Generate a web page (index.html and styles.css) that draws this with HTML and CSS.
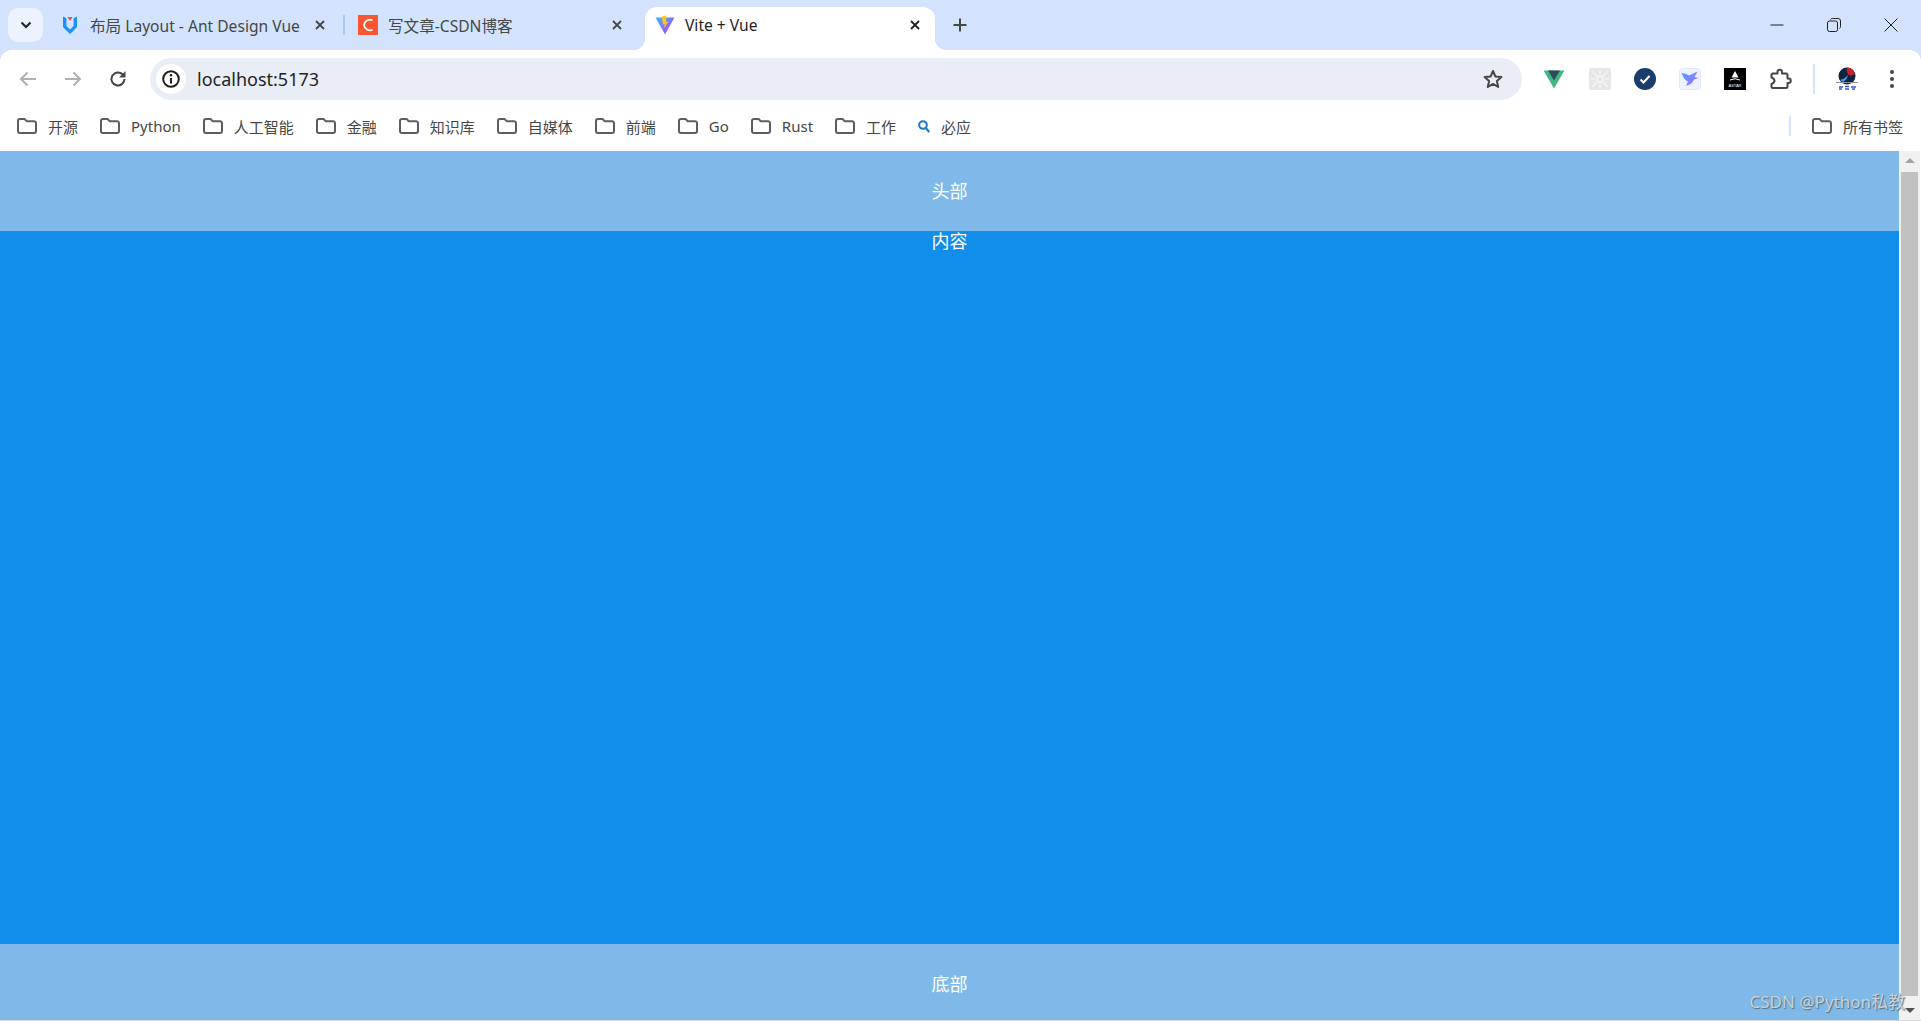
FILE: index.html
```html
<!DOCTYPE html>
<html lang="zh-CN">
<head>
  <meta charset="UTF-8" />
  <title>Vite + Vue</title>
  <link rel="stylesheet" href="styles.css">
</head>
<body>
  <svg class="sprites" width="0" height="0">
    <symbol id="folder" viewBox="0 0 20 16">
      <path d="M3 1h4.600l2 2.200H17a2 2 0 0 1 2 2V13a2 2 0 0 1-2 2H3a2 2 0 0 1-2-2V3a2 2 0 0 1 2-2z" fill="none" stroke="#5c5e61" stroke-width="2" stroke-linejoin="round"/>
    </symbol>
    <symbol id="close" viewBox="0 0 12 12">
      <path d="M2 2l8 8M10 2l-8 8" fill="none" stroke="currentColor" stroke-width="1.800"/>
    </symbol>
    <linearGradient id="vite-a" x1="0" y1="0" x2="1" y2="1">
      <stop offset="0" stop-color="#41b6ff"/>
      <stop offset="1" stop-color="#bd34fe"/>
    </linearGradient>
    <linearGradient id="bird-a" x1="0" y1="0" x2="1" y2="1">
      <stop offset="0" stop-color="#4fa4ff"/>
      <stop offset="1" stop-color="#a56bff"/>
    </linearGradient>
  </svg>

  <!-- tab strip -->
  <div class="tabstrip">
    <div class="tab-search">
      <svg width="12" height="8" viewBox="0 0 12 8"><path d="M1.500 1.500L6 6l4.500-4.500" fill="none" stroke="#1f1f1f" stroke-width="2"/></svg>
    </div>
    <div class="tab tab-first">
      <svg class="favicon" width="20" height="20" viewBox="0 0 20 20">
        <path d="M3 1.500l3.400 1.800V11l3.600 3.400 3.600-3.400V3.300L17 1.500V12l-7 7-7-7z" fill="#1890ff"/>
        <path d="M7.500 2h5L10 6z" fill="#f5475b"/>
      </svg>
      <span class="tab-title">布局 Layout - Ant Design Vue</span>
      <svg class="tab-close" width="12" height="12"><use href="#close"/></svg>
    </div>
    <div class="tab-sep"></div>
    <div class="tab tab-second">
      <svg class="favicon" width="20" height="20" viewBox="0 0 20 20">
        <rect width="20" height="20" fill="#fc5531"/>
        <path d="M14.500 5.200A6 6 0 0 0 6 10a6 6 0 0 0 8.500 4.800" fill="none" stroke="#fff" stroke-width="1.800"/>
      </svg>
      <span class="tab-title">写文章-CSDN博客</span>
      <svg class="tab-close" width="12" height="12"><use href="#close"/></svg>
    </div>
    <div class="tab tab-active">
      <svg class="favicon" width="20" height="20" viewBox="0 0 20 20">
        <path d="M0.500 2.500L19.500 2.500 10 19.500z" fill="url(#vite-a)"/>
        <path d="M11.500 0.500L7 1.500 7.800 9.500 9.800 9 9 13.500 13.500 6.500 11 7z" fill="#ffc517"/>
      </svg>
      <span class="tab-title">Vite + Vue</span>
      <svg class="tab-close" width="12" height="12"><use href="#close"/></svg>
    </div>
    <div class="new-tab">
      <svg width="14" height="14" viewBox="0 0 14 14"><path d="M7 0.500v13M0.500 7h13" stroke="#444746" stroke-width="2"/></svg>
    </div>
    <div class="win-controls">
      <div class="win-btn">
        <svg width="14" height="14" viewBox="0 0 14 14"><path d="M0.500 7h13" stroke="#1f1f1f" stroke-width="1"/></svg>
      </div>
      <div class="win-btn">
        <svg width="14" height="14" viewBox="0 0 14 14">
          <rect x="0.500" y="3" width="10" height="10.500" rx="2" fill="none" stroke="#1f1f1f"/>
          <path d="M3.500 1.500q0.500-1 2-1h5.500q2.500 0 2.500 2.500V8.500q0 1.500-1 2" fill="none" stroke="#1f1f1f"/>
        </svg>
      </div>
      <div class="win-btn">
        <svg width="14" height="14" viewBox="0 0 14 14"><path d="M0.500 0.500l13 13M13.500 0.500l-13 13" stroke="#1f1f1f" stroke-width="1"/></svg>
      </div>
    </div>
  </div>

  <!-- address bar -->
  <div class="toolbar">
    <div class="tool-btn">
      <svg width="18" height="16" viewBox="0 0 18 16"><path d="M17 8H2M8.500 1.500L2 8l6.500 6.500" fill="none" stroke="#aeb0b2" stroke-width="2"/></svg>
    </div>
    <div class="tool-btn">
      <svg width="18" height="16" viewBox="0 0 18 16"><path d="M1 8h15M9.500 1.500L16 8l-6.500 6.500" fill="none" stroke="#aeb0b2" stroke-width="2"/></svg>
    </div>
    <div class="tool-btn">
      <svg width="18" height="18" viewBox="0 0 18 18"><path d="M15.500 9a6.500 6.500 0 1 1-2-4.700L15.500 6.300" fill="none" stroke="#444746" stroke-width="2"/><path d="M16.500 1v6.500H10z" fill="#444746"/></svg>
    </div>
    <div class="address">
      <div class="site-info">
        <svg width="18" height="18" viewBox="0 0 18 18">
          <circle cx="9" cy="9" r="7.800" fill="none" stroke="#1f1f1f" stroke-width="2"/>
          <path d="M9 8v5.500" stroke="#1f1f1f" stroke-width="2"/>
          <circle cx="9" cy="5.300" r="1.200" fill="#1f1f1f"/>
        </svg>
      </div>
      <span class="url">localhost:5173</span>
      <svg class="star" width="20" height="20" viewBox="0 0 20 20"><path d="M10 2l2.400 5.500 6 .6-4.500 4 1.300 5.900L10 14.900 4.800 18l1.300-5.900-4.500-4 6-.6z" fill="none" stroke="#444746" stroke-width="2" stroke-linejoin="round"/></svg>
    </div>
    <div class="ext-btn">
      <svg width="22" height="19" viewBox="0 0 22 19"><path d="M0.500 0.500h21L11 18.500z" fill="#41b883"/><path d="M5 0.500h12L11 10.500z" fill="#35495e"/></svg>
    </div>
    <div class="ext-btn">
      <svg width="22" height="22" viewBox="0 0 22 22">
        <rect width="22" height="22" rx="2" fill="#e6e6e6"/>
        <circle cx="11" cy="11" r="3" fill="none" stroke="#f7f7f7" stroke-width="1.500"/>
        <path d="M3 3l5 5M19 3l-5 5M3 19l5-5M19 19l-5-5M2 11h4M16 11h4M11 2v4M11 16v4" stroke="#f5f5f5" stroke-width="1.500"/>
      </svg>
    </div>
    <div class="ext-btn">
      <svg width="22" height="22" viewBox="0 0 22 22"><circle cx="11" cy="11" r="11" fill="#1a3e6b"/><path d="M6.500 11.500l3 3 6-6.500" fill="none" stroke="#fff" stroke-width="2"/></svg>
    </div>
    <div class="ext-btn">
      <svg width="22" height="22" viewBox="0 0 22 22">
        <rect x="0.500" y="0.500" width="21" height="21" rx="3" fill="#eef1ff" stroke="#e3e6f5"/>
        <path d="M2.500 5q4.500 0 7.500 2.500l8.500-4-3 5.500 4 1-4.500 1.500q-1.500 4.500-8 6.500l2-4.500Q5 12 2.500 5z" fill="url(#bird-a)"/>
      </svg>
    </div>
    <div class="ext-btn">
      <svg width="22" height="22" viewBox="0 0 22 22">
        <rect width="22" height="22" fill="#000"/>
        <path d="M11 3l3.500 6.500h-7z" fill="#fff"/>
        <path d="M6 12q5-2.500 10 0" fill="none" stroke="#fff"/>
        <text class="astar-text" x="11" y="18.500" text-anchor="middle">ASTAR</text>
      </svg>
    </div>
    <div class="ext-btn">
      <svg width="22" height="22" viewBox="0 0 22 22"><path d="M2.500 5.500h5V4a2.200 2.200 0 0 1 4.500 0v1.500h4a1.500 1.500 0 0 1 1.500 1.500v3.500h1a2.200 2.200 0 0 1 0 4.500h-1v3.500a1.500 1.500 0 0 1-1.500 1.500H3a1.500 1.500 0 0 1-1.500-1.500V16q3-1 3-3.200T1.500 9.500V6.500z" fill="none" stroke="#444746" stroke-width="2" stroke-linejoin="round"/></svg>
    </div>
    <div class="tool-sep"></div>
    <div class="ext-btn">
      <svg width="24" height="24" viewBox="0 0 24 24">
        <circle cx="12" cy="9" r="8.500" fill="#10233f"/>
        <path d="M12 .5a8.500 8.500 0 0 1 8 6q-3 3-6 1.500T12 .5z" fill="#c8242b"/>
        <path d="M5 13q5-1 8-5-1 5-5 7z" fill="#4f9ae8"/>
        <path d="M1 15.500h22" stroke="#8a8f96"/>
        <path d="M4 20h4M4 22h3M10 19.500h4M10 22h4M16 20h5M17 22h3" stroke="#3a55c8" stroke-width="1.500"/>
      </svg>
    </div>
    <div class="ext-btn">
      <svg width="6" height="20" viewBox="0 0 6 20"><circle cx="3" cy="3" r="2" fill="#444746"/><circle cx="3" cy="10" r="2" fill="#444746"/><circle cx="3" cy="17" r="2" fill="#444746"/></svg>
    </div>
  </div>

  <!-- bookmarks -->
  <div class="bookmarks">
    <div class="bookmark"><svg class="folder"><use href="#folder"/></svg><span>开源</span></div>
    <div class="bookmark"><svg class="folder"><use href="#folder"/></svg><span>Python</span></div>
    <div class="bookmark"><svg class="folder"><use href="#folder"/></svg><span>人工智能</span></div>
    <div class="bookmark"><svg class="folder"><use href="#folder"/></svg><span>金融</span></div>
    <div class="bookmark"><svg class="folder"><use href="#folder"/></svg><span>知识库</span></div>
    <div class="bookmark"><svg class="folder"><use href="#folder"/></svg><span>自媒体</span></div>
    <div class="bookmark"><svg class="folder"><use href="#folder"/></svg><span>前端</span></div>
    <div class="bookmark"><svg class="folder"><use href="#folder"/></svg><span>Go</span></div>
    <div class="bookmark"><svg class="folder"><use href="#folder"/></svg><span>Rust</span></div>
    <div class="bookmark"><svg class="folder"><use href="#folder"/></svg><span>工作</span></div>
    <div class="bookmark bookmark-bing">
      <svg class="search" width="12" height="13" viewBox="0 0 12 13"><circle cx="5" cy="5" r="3.800" fill="none" stroke="#1976c8" stroke-width="2"/><path d="M7.800 8l3.500 4" stroke="#1976c8" stroke-width="2.200"/></svg>
      <span>必应</span>
    </div>
    <div class="bookmarks-end">
      <div class="bookmarks-sep"></div>
      <div class="bookmark all-marks"><svg class="folder"><use href="#folder"/></svg><span>所有书签</span></div>
    </div>
  </div>

  <!-- page -->
  <div class="viewport">
    <div class="layout">
      <header class="layout-header">头部</header>
      <main class="layout-content">内容</main>
      <footer class="layout-footer">底部</footer>
    </div>
    <div class="scrollbar">
      <div class="scroll-up"></div>
      <div class="scroll-thumb"></div>
      <div class="scroll-down"></div>
    </div>
    <div class="watermark">CSDN @Python私教</div>
  </div>
</body>
</html>
```

FILE: styles.css
```css
* {
  box-sizing: border-box;
}

html, body {
  height: 100%;
}

body {
  margin: 0;
  display: flex;
  flex-direction: column;
  overflow: hidden;
  background-color: #d3e3fd;
  font-family: "Noto Sans", "Noto Sans CJK SC", sans-serif;
  color: #1f1f1f;
}

.sprites {
  position: absolute;
}

/* tab strip */
.tabstrip {
  display: flex;
  align-items: flex-end;
  height: 50px;
  padding-left: 8px;
  flex-shrink: 0;
}

.tab-search {
  display: flex;
  align-items: center;
  justify-content: center;
  width: 35px;
  height: 34px;
  margin-bottom: 8px;
  border-radius: 10px;
  background-color: #ecf2fe;
}

.tab {
  position: relative;
  display: flex;
  align-items: center;
  height: 43px;
  padding-bottom: 7px;
  font-size: 15.600px;
  color: #444746;
}

.tab-first {
  width: 271px;
  margin-left: 17px;
}

.tab-second {
  width: 279px;
  margin-left: 13px;
}

.tab-sep {
  width: 2px;
  height: 20px;
  margin-bottom: 15px;
  margin-left: 12px;
  background-color: #a8c7fa;
}

.tab-active {
  width: 290px;
  margin-left: 8px;
  padding-left: 10px;
  border-radius: 12px 12px 0 0;
  background-color: #fff;
  color: #1f1f1f;
}

.tab-active::before,
.tab-active::after {
  content: "";
  position: absolute;
  bottom: 0;
  width: 12px;
  height: 12px;
}

.tab-active::before {
  left: -12px;
  background: radial-gradient(circle at 0 0, transparent 12px, #fff 12.500px);
}

.tab-active::after {
  right: -12px;
  background: radial-gradient(circle at 100% 0, transparent 12px, #fff 12.500px);
}

.favicon {
  flex-shrink: 0;
  margin-right: 10px;
}

.tab-title {
  white-space: nowrap;
}

.tab-close {
  margin-left: auto;
  color: #444746;
}

.tab-first .tab-close {
  margin-right: 5px;
}

.tab-second .tab-close {
  margin-right: 14px;
}

.tab-active .tab-close {
  margin-right: 14px;
  color: #1f1f1f;
}

.new-tab {
  display: flex;
  align-items: center;
  justify-content: center;
  width: 14px;
  height: 43px;
  padding-bottom: 7px;
  margin-left: 18px;
}

.win-controls {
  display: flex;
  align-self: flex-start;
  margin-left: auto;
  margin-right: 2px;
}

.win-btn {
  display: flex;
  align-items: center;
  justify-content: center;
  width: 57px;
  height: 49px;
}

/* address bar */
.toolbar {
  position: relative;
  display: flex;
  align-items: center;
  height: 58px;
  padding: 8px 6px 8px 5px;
  flex-shrink: 0;
  border-radius: 12px 12px 0 0;
  background-color: #fff;
}

.tool-btn {
  display: flex;
  align-items: center;
  justify-content: center;
  width: 45px;
  height: 42px;
}

.address {
  display: flex;
  align-items: center;
  flex: 1;
  height: 42px;
  margin-left: 10px;
  margin-right: 10px;
  padding-left: 6px;
  padding-right: 19px;
  border-radius: 21px;
  background-color: #e9edf6;
}

.site-info {
  display: flex;
  align-items: center;
  justify-content: center;
  width: 30px;
  height: 30px;
  border-radius: 50%;
  background-color: #fff;
}

.url {
  margin-left: 11px;
  font-size: 18px;
  color: #1f1f1f;
}

.star {
  margin-left: auto;
}

.ext-btn {
  display: flex;
  align-items: center;
  justify-content: center;
  width: 45.300px;
  height: 42px;
}

.astar-text {
  font-family: "Liberation Sans", sans-serif;
  font-size: 4px;
  fill: #fff;
}

.tool-sep {
  width: 2px;
  height: 30px;
  margin: 0 9.500px;
  background-color: #d3e3fd;
}

/* bookmarks */
.bookmarks {
  display: flex;
  align-items: center;
  height: 43px;
  padding-left: 17px;
  padding-right: 18px;
  padding-bottom: 7px;
  flex-shrink: 0;
  background-color: #fff;
  font-size: 15px;
  color: #444746;
}

.bookmark {
  display: flex;
  align-items: center;
  margin-right: 22px;
  white-space: nowrap;
}

.folder {
  width: 20px;
  height: 16px;
  margin-right: 11px;
}

.search {
  margin-right: 11px;
}

.bookmark-bing {
  margin-right: 0;
}

.bookmarks-end {
  display: flex;
  align-items: center;
  margin-left: auto;
}

.bookmarks-sep {
  width: 2px;
  height: 20px;
  margin-right: 21px;
  background-color: #d3e3fd;
}

.all-marks {
  margin-right: 0;
}

/* page */
.viewport {
  position: relative;
  display: flex;
  flex: 1;
  min-height: 0;
  border-bottom: 1px solid #d8d8d8;
  background-color: #fff;
}

.layout {
  display: flex;
  flex-direction: column;
  flex: 1;
  text-align: center;
  font-size: 18px;
  color: #fff;
}

.layout-header {
  height: 80px;
  line-height: 81px;
  background-color: #7eb9e9;
}

.layout-content {
  flex: 1;
  line-height: 21px;
  background-color: #108ee9;
}

.layout-footer {
  height: 76px;
  line-height: 81px;
  background-color: #7eb9e9;
}

.scrollbar {
  display: flex;
  flex-direction: column;
  align-items: center;
  width: 21px;
  margin-right: 1px;
  background-color: #f1f1f1;
}

.scroll-up,
.scroll-down {
  width: 0;
  height: 0;
  margin: 7px 0;
  border-left: 5px solid transparent;
  border-right: 5px solid transparent;
}

.scroll-up {
  border-bottom: 5px solid #a3a3a3;
}

.scroll-down {
  margin-top: auto;
  border-top: 5px solid #505050;
}

.scroll-thumb {
  width: 17px;
  height: 824px;
  margin-top: 2px;
  background-color: #c1c1c1;
}

.watermark {
  position: absolute;
  right: 16px;
  bottom: 7px;
  font-size: 17px;
  white-space: nowrap;
  color: #c4d2dc;
  text-shadow: 1px 1px 1px #5b6b78;
}
```
